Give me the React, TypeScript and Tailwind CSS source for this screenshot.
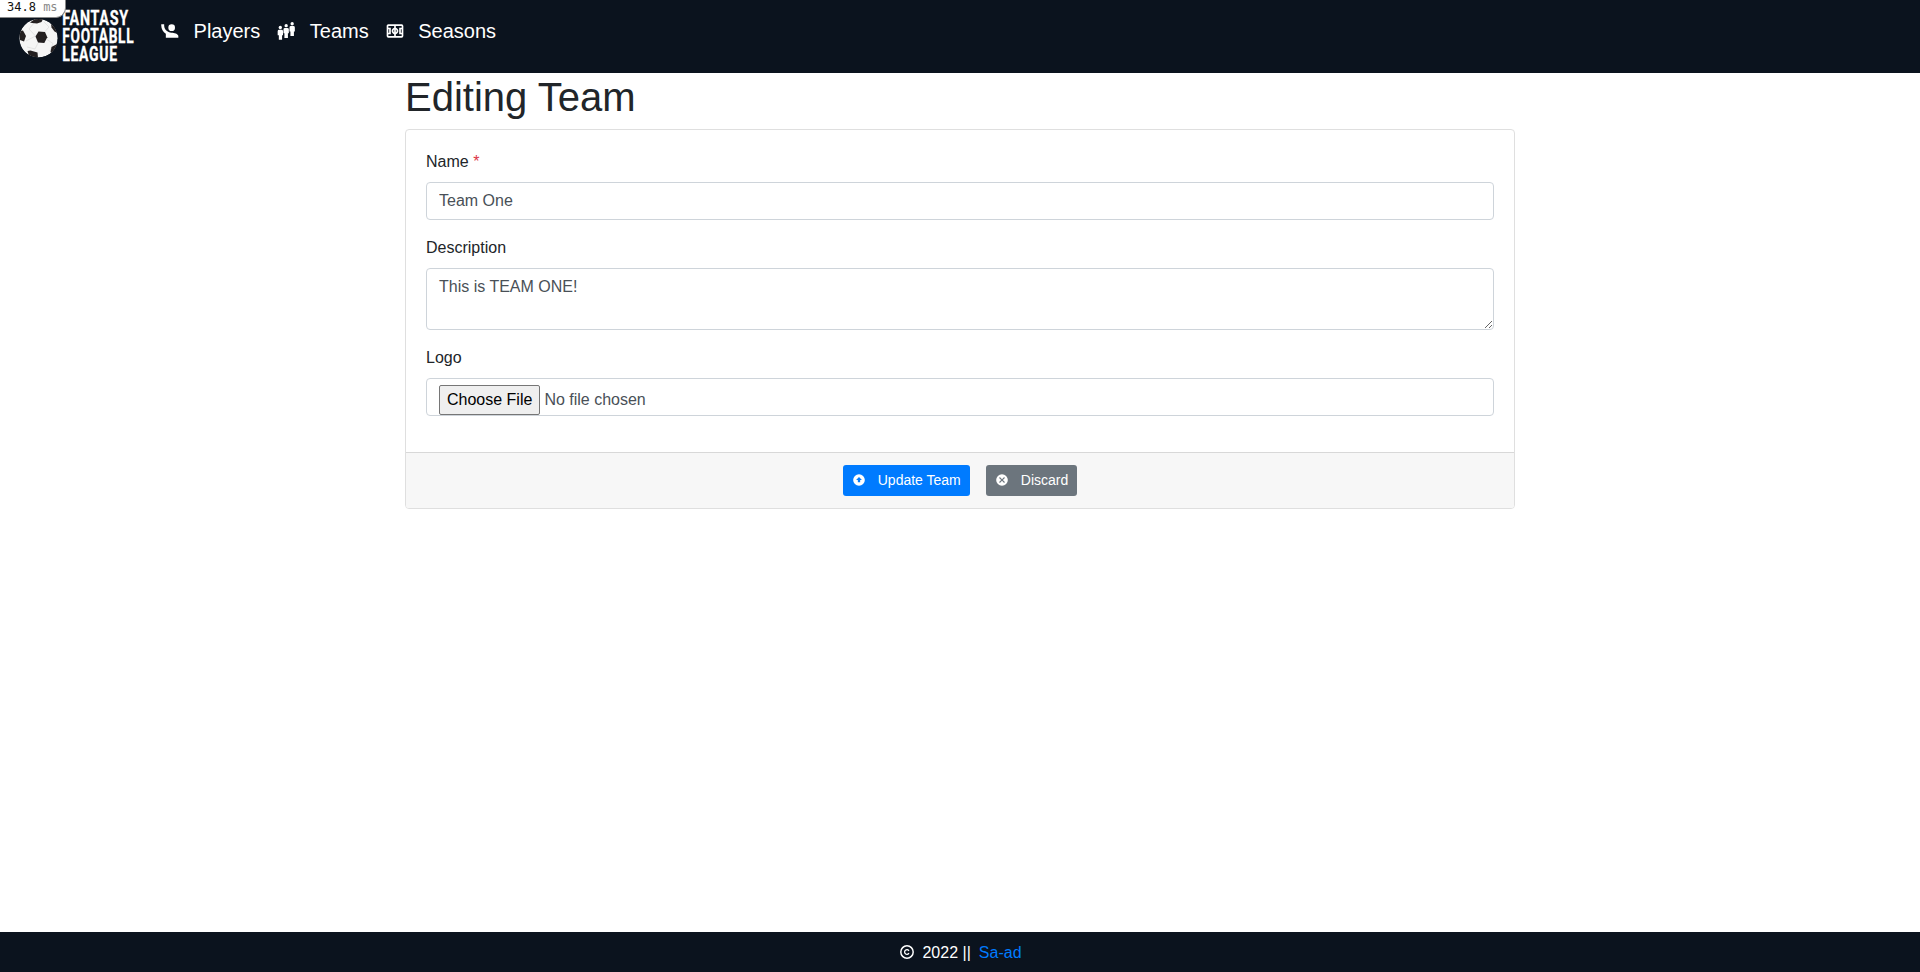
import type { ReactNode } from "react";

function Icon({ className, children }: { className: string; children: ReactNode }) {
  return (
    <svg viewBox="0 0 24 24" fill="currentColor" fillRule="evenodd" className={className} aria-hidden="true">
      {children}
    </svg>
  );
}

function Brand() {
  return (
    <svg viewBox="0 0 120 57" className="h-[57px] w-[120px] shrink-0 overflow-visible" role="img" aria-label="Fantasy league logo">
      <defs>
        <clipPath id="ball">
          <circle cx="22.5" cy="30.3" r="19.2" />
        </clipPath>
      </defs>
      <g clipPath="url(#ball)">
        <circle cx="22.5" cy="30.3" r="19.2" fill="#f5f5f5" />
        <g fill="none" stroke="#d8d8d8" strokeWidth="0.6">
          <path d="M19.500 28 13 21M29 23.500l4-4.500M31 31.500l6 4M22 35l-3 6M19.500 28 10 33M13 21l5-6M33 19l-5-5M37 35.500 34 43M19 41l-8-2" />
        </g>
        <g fill="#231f20">
          <path d="M19.500 28.500 22.500 23.500 29 24 31.300 29.300 28.300 35 22 34.500Z" />
          <path d="M14 14.500 19 11h8l-1.500 3-4.500 1.500-5-.500Z" />
          <path d="M3 23 7 22.500 10 28 8 33.500 4 32Z" />
          <path d="m11.500 43 3-.500 7 2L22 50l-9-2Z" />
          <path d="m35 16 3 2 3.500 7-3-1.500-3-4Z" />
          <path d="m35.500 39 5.500-3-1 6-4 4-1.500-2Z" />
        </g>
      </g>
      <g fill="#fff" stroke="#fff" strokeWidth="0.35" className="font-['Roboto',sans-serif] text-[20px] font-bold tracking-[1px]">
        <text x="46.300" y="16.500" textLength="66.500" lengthAdjust="spacingAndGlyphs">FANTASY</text>
        <text x="46.300" y="34.800" textLength="72" lengthAdjust="spacingAndGlyphs">FOOTABLL</text>
        <text x="46.300" y="53" textLength="55.500" lengthAdjust="spacingAndGlyphs">LEAGUE</text>
      </g>
    </svg>
  );
}

function NavLink({ icon, label }: { icon: ReactNode; label: string }) {
  return (
    <a href="#" className="flex items-center gap-[13.56px] p-2 text-xl leading-[30px] text-white">
      <Icon className="-mt-px size-5">{icon}</Icon>
      {label}
    </a>
  );
}

const playerIcon = (
  <path d="M1.5 4v1.500c0 4.150 2.210 7.780 5.500 9.800V20h15v-2c0-2.660-5.330-4-8-4h-.250C9 14 5 10 5 5.500V4M14 4a4 4 0 1 0 0 8 4 4 0 0 0 0-8Z" />
);

const teamIcon = (
  <>
    <circle cx="5.200" cy="7.800" r="2" />
    <path d="M3.700 10.500h3q1.700 0 1.700 1.700V17H7.300v5.500H3.400V17H2v-4.800q0-1.700 1.700-1.700Z" />
    <circle cx="12.200" cy="5.600" r="2" />
    <path d="M10.700 8.300h3q1.700 0 1.700 1.700v4.800h-1.100v5.500h-4.200v-5.500H9V10q0-1.700 1.700-1.700Z" />
    <circle cx="19.400" cy="3.300" r="2" />
    <path d="M17.900 6h3q1.700 0 1.700 1.700v4.800h-1.100V18h-4.200v-5.500h-1.100V7.700q0-1.700 1.700-1.700Z" />
  </>
);

const seasonIcon = (
  <path d="M4 4h16a2 2 0 0 1 2 2v12a2 2 0 0 1-2 2H4a2 2 0 0 1-2-2V6c0-1.110.900-2 2-2Zm9 2v2.130c1.720.450 3 2 3 3.870s-1.280 3.410-3 3.860V18h7v-2h-3V8h3V6ZM4 6v2h3v8H4v2h7v-2.140c-1.720-.450-3-2-3-3.860s1.280-3.420 3-3.870V6Zm0 4v4h1v-4Zm15 0v4h1v-4Zm-6 .270v3.460a2 2 0 0 0 0-3.460Zm-2 0a2 2 0 0 0 0 3.460Z" />
);

const control =
  "block w-full rounded border border-[#ced4da] bg-white px-3 py-1.5 text-base leading-6 text-[#495057]";

export default function App() {
  return (
    <div className="relative flex min-h-screen flex-col bg-white font-['Liberation_Sans',Arial,sans-serif] text-base text-[#212529]">
      <div className="absolute top-0 left-0 z-10 h-[18px] w-[66px] rounded-br-[10px] border-r border-b border-[#888] bg-white pl-[7px] font-['DejaVu_Sans_Mono',monospace] text-xs leading-[14px] whitespace-nowrap text-[#111]">
        34.8 <span className="text-[#888]">ms</span>
      </div>

      <nav className="flex h-[73px] items-start bg-[#0b131e] px-4 py-2">
        <Brand />
        <div className="ml-4 flex">
          <NavLink icon={playerIcon} label="Players" />
          <NavLink icon={teamIcon} label="Teams" />
          <NavLink icon={seasonIcon} label="Seasons" />
        </div>
      </nav>

      <main className="mx-auto w-[1110px] flex-1">
        <h1 className="mb-2 text-[40px] leading-[48px] font-normal">Editing Team</h1>
        <form className="rounded border border-[#dfdfdf]">
          <div className="flex flex-col gap-4 px-5 pt-5 pb-9">
            <div>
              <label htmlFor="name" className="mb-2 block leading-6">
                Name <span className="text-[#dc3545]">*</span>
              </label>
              <input id="name" type="text" defaultValue="Team One" className={`${control} h-[38px]`} />
            </div>
            <div>
              <label htmlFor="description" className="mb-2 block leading-6">Description</label>
              <textarea id="description" rows={2} defaultValue="This is TEAM ONE!" className={`${control} h-[62px] resize-y`} />
            </div>
            <div>
              <label htmlFor="logo" className="mb-2 block leading-6">Logo</label>
              <input
                id="logo"
                type="file"
                className={`${control} h-[38px] overflow-hidden file:mr-1 file:rounded-[2px] file:border file:border-[#767676] file:bg-[#efefef] file:px-[7px] file:py-0.5 file:text-black`}
              />
            </div>
          </div>
          <div className="flex justify-center gap-4 rounded-b-[3px] border-t border-[#d8d8d8] bg-[#f7f7f7] py-3">
            <button type="button" className="flex h-[31px] items-center rounded-[3px] bg-[#007bff] px-[9px] text-sm leading-[21px] text-white">
              <Icon className="mr-3 mb-[2px] size-3.5">
                <path d="M12 2a10 10 0 1 1 0 20 10 10 0 0 1 0-20Zm0 5-5 5h3v4h4v-4h3Z" />
              </Icon>
              Update Team
            </button>
            <button type="button" className="flex h-[31px] items-center rounded-[3px] bg-[#6c757d] px-[9px] text-sm leading-[21px] text-white">
              <Icon className="mr-3 mb-[2px] size-3.5">
                <path d="M12 2a10 10 0 1 1 0 20 10 10 0 0 1 0-20Zm3.590 5L12 10.590 8.410 7 7 8.410 10.590 12 7 15.590 8.410 17 12 13.410 15.590 17 17 15.590 13.410 12 17 8.410Z" />
              </Icon>
              Discard
            </button>
          </div>
        </form>
      </main>

      <footer className="flex h-10 items-center justify-center bg-[#0b131e] pt-px leading-6 text-white">
        <Icon className="mr-[7px] mb-px ml-px size-4">
          <path d="M12 1.600a10.400 10.400 0 1 1 0 20.800 10.400 10.400 0 0 1 0-20.800Zm0 2.200a8.200 8.200 0 1 0 0 16.400 8.200 8.200 0 0 0 0-16.400Z" />
          <path d="M15.800 9.700A4.500 4.500 0 1 0 15.800 14.300L14 13.300A2.500 2.500 0 1 1 14 10.700Z" />
        </Icon>
        2022 ||
        <a href="#" className="ml-2 text-[#007bff]">Sa-ad</a>
      </footer>
    </div>
  );
}
